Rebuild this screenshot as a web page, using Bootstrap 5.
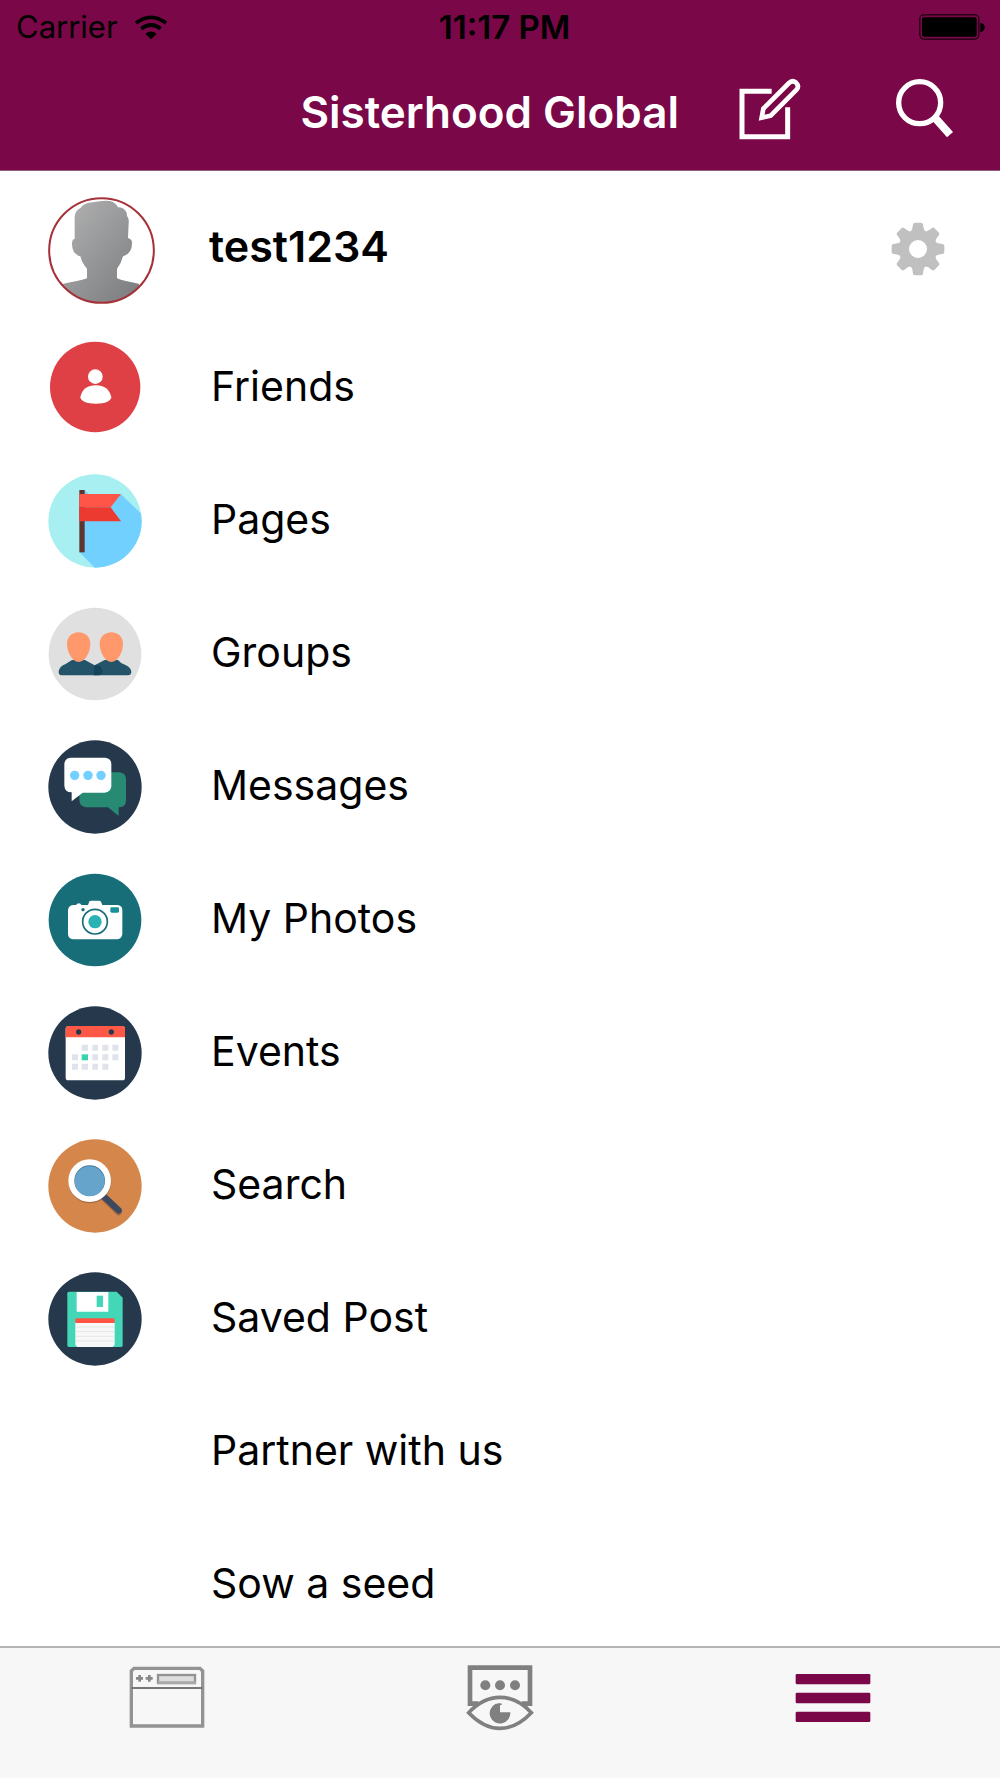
<!DOCTYPE html>
<html lang="en">
<head>
<meta charset="utf-8">
<meta name="viewport" content="width=device-width, initial-scale=1">
<title>Sisterhood Global</title>
<link href="https://cdn.jsdelivr.net/npm/bootstrap@5.3.0/dist/css/bootstrap.min.css" rel="stylesheet">
<style>
  :root { --brand: #7a0747; }
  body { font-family: Inter, "Liberation Sans", sans-serif; color: #000; background: #fff; }
  svg { display: block; flex: none; }
  .app-head { background: var(--brand); border-bottom: 1px solid #8d5f78; }
  .status-row { height: 54px; padding: 0 15px 0 16px; font-size: 31px; line-height: 54px; }
  .status-time { font-size: 33px; }
  .title-row { height: 116px; padding: 0 45px; }
  .title-row .btn { margin-bottom: 4px; }
  .app-title { font-size: 44px; line-height: 56px; font-weight: 600; color: #fff; margin-right: 58px; }
  .compose-btn { margin-right: 94px; }
  .menu-scroll { min-height: 0; scrollbar-width: none; }
  .profile-row { height: 150px; padding: 9px 52px 0 48px; }
  .profile-row .btn { margin-bottom: 4px; }
  .profile-name { font-size: 43px; line-height: 48px; font-weight: 600; margin-left: 54px; padding-bottom: 9px; }
  .menu-link { height: 133px; padding: 0 48px; gap: 69px; font-size: 41px; line-height: 48px; color: #000; text-decoration: none; }
  .menu-link span { padding-bottom: 4px; }
  .icon-slot { width: 94px; flex: none; }
  .tab-strip { height: 132px; background: #f7f7f7; border-top: 2px solid #b5b5b5; }
  .tab-strip a { padding-top: 16px; }
</style>
<script src="https://cdn.jsdelivr.net/npm/bootstrap@5.3.0/dist/js/bootstrap.bundle.min.js" defer></script>
</head>
<body>
<div class="vh-100 d-flex flex-column">
  <header class="app-head">
    <div class="status-row row g-0">
      <div class="col d-flex align-items-center">
        <span>Carrier</span>
        <svg class="ms-3" width="34" height="26" viewBox="399 40 102 78" aria-label="Wi-Fi"><path d="M405 67Q450 33 495 67M421 84Q450 62 479 84" fill="none" stroke="#000" stroke-width="11"/><path d="M433 99Q450 86 467 99L450 116Z"/></svg>
      </div>
      <div class="status-time col-auto ps-2 fw-semibold">11:17 PM</div>
      <div class="col d-flex align-items-center justify-content-end">
        <svg width="66" height="26" viewBox="1259 43 198 78" aria-label="Battery"><rect x="1261.500" y="45.500" width="177" height="73" rx="12" fill="none" stroke="#000" stroke-width="3"/><rect x="1268" y="53" width="164" height="58" rx="6"/><path d="M1443 69q13 2 13 14t-13 14z"/></svg>
      </div>
    </div>
    <div class="title-row d-flex align-items-center justify-content-end">
      <h1 class="app-title mb-0">Sisterhood Global</h1>
      <button type="button" class="btn p-0 border-0 compose-btn" aria-label="Compose">
        <svg width="64" height="64" viewBox="714 234 192 192" fill="none" stroke="#fff"><path d="M818 274H729V410H866V322" stroke-width="15"/><path d="M788 353L793 326L870 249Q880 239 891 248Q902 259 892 270L815 347Z" stroke-width="14"/></svg>
      </button>
      <button type="button" class="btn p-0 border-0" aria-label="Search">
        <svg width="60" height="64" viewBox="1182 234 180 192" fill="none" stroke="#fff"><circle cx="1256" cy="308" r="63" stroke-width="16"/><path d="M1299 350L1347 404" stroke-width="24"/></svg>
      </button>
    </div>
  </header>

  <main class="menu-scroll flex-fill overflow-auto">
    <div class="profile-row d-flex align-items-center">
      <svg width="107" height="107" viewBox="54 51 321 321" role="img" aria-label="Profile picture">
        <defs>
          <linearGradient id="shade" x1="0" y1="0" x2="1" y2="1"><stop offset="0" stop-color="#b4b4b4"/><stop offset="1" stop-color="#76787b"/></linearGradient>
          <clipPath id="face"><circle cx="214.500" cy="211.500" r="157"/></clipPath>
        </defs>
        <path clip-path="url(#face)" fill="url(#shade)" d="M134 176V108Q136 91 152 83Q162 69 188 67Q214 61 240 63Q258 68 264 82Q282 82 290 98L291 108Q298 115 296 130L294 174Q307 177 306 190Q306 221 279 229Q274 250 261 266V295Q282 304 326 311L345 375H84L100 311Q145 304 171 295V266Q156 250 151 229Q125 222 126 190Q126 178 134 176Z"/>
        <circle cx="214.500" cy="211.500" r="157" fill="none" stroke="#a63239" stroke-width="6"/>
      </svg>
      <div class="profile-name">test1234</div>
      <button type="button" class="btn p-0 border-0 ms-auto" aria-label="Settings">
        <svg width="60" height="60" viewBox="85 56 180 180">
          <g fill="#c0c0c0"><circle cx="175" cy="146" r="57"/>
          <g id="teeth"><path id="tooth" d="M152 94Q158 92 160 72Q161 67 166 67H184Q189 67 190 72Q192 92 198 94L190 110H160Z"/><use href="#tooth" transform="rotate(90 175 146)"/><use href="#tooth" transform="rotate(180 175 146)"/><use href="#tooth" transform="rotate(270 175 146)"/></g>
          <use href="#teeth" transform="rotate(45 175 146)"/></g>
          <circle cx="175" cy="146" r="27" fill="#fff"/>
        </svg>
      </button>
    </div>

    <nav class="d-flex flex-column" aria-label="Menu">
      <a class="menu-link d-flex align-items-center" href="#friends">
        <svg width="94" height="94" viewBox="53 481 282 282"><circle cx="194.500" cy="619" r="135.500" fill="#df4045"/><g fill="#fff"><circle cx="195" cy="588" r="22"/><path d="M150 650Q157 614 197 614Q235 614 243 650Q239 669 197 669Q154 669 150 650Z"/></g></svg>
        <span>Friends</span></a>
      <a class="menu-link d-flex align-items-center" href="#pages">
        <svg width="94" height="94" viewBox="53 39 282 282"><defs><clipPath id="disc"><circle cx="194" cy="180" r="140"/></clipPath></defs><circle cx="194" cy="180" r="140" fill="#a7eff0"/><path clip-path="url(#disc)" fill="#72d0ff" d="M163 88L175 100H272L345 170V330H203L148 274Z"/><path fill="#5f3430" d="M147 87H163V274H147Z"/><path fill="#ff5548" d="M147 99H272L241 139H147Z"/><path fill="#ec3a30" d="M147 139H241L272 181H147Z"/></svg>
        <span>Pages</span></a>
      <a class="menu-link d-flex align-items-center" href="#groups">
        <svg width="94" height="94" viewBox="53 438 282 282"><circle cx="194" cy="579" r="139" fill="#e0e0e0"/><path fill="#235469" d="M93 643Q84 642 85 631Q88 615 106 609L125 597H164L193 613L223 597H263Q270 607 284 611Q303 619 303 633Q302 643 293 643Z"/><path fill="#12445b" d="M193 613Q210 610 216 626Q218 639 207 643H190Z"/><path id="head" fill="#ff996c" d="M145 514C166 514 180 529 180 549C180 575 163 603 145 603C127 603 110 575 110 549C110 529 124 514 145 514Z"/><use href="#head" x="98"/></svg>
        <span>Groups</span></a>
      <a class="menu-link d-flex align-items-center" href="#messages">
        <svg width="94" height="94" viewBox="53 58 282 282"><circle cx="194" cy="199" r="140" fill="#26384b"/><path fill="#278b73" d="M165 155H267Q287 157 287 175V240Q286 259 265 260V286L233 260H168Q147 257 147 237V173Z"/><path fill="#fff" d="M120 111H225Q243 113 243 130V197Q241 215 223 216H157L124 242V215Q103 214 102 195V129Q104 112 120 111Z"/><g fill="#72cfff"><circle cx="133" cy="164" r="14"/><circle cx="173" cy="164" r="14"/><circle cx="212" cy="164" r="14"/></g></svg>
        <span>Messages</span></a>
      <a class="menu-link d-flex align-items-center" href="#photos">
        <svg width="94" height="94" viewBox="53 458 282 282"><circle cx="194" cy="599" r="139" fill="#176e79"/><path fill="#fff" d="M128 554H137Q140 549 146 549Q151 549 153 554H173L177 543Q179 541 184 541H206Q211 541 212 544L216 554H261Q276 556 276 569V642Q274 656 261 657H128Q114 655 113 642V569Q115 555 128 554Z"/><circle cx="194" cy="604" r="37" fill="#fff" stroke="#176e79" stroke-width="5"/><circle cx="194" cy="604" r="20" fill="#29b2b3"/><circle cx="158" cy="568" r="5" fill="#176e79"/><rect x="240" y="561" width="26" height="16" rx="4" fill="#18929a"/></svg>
        <span>My Photos</span></a>
      <a class="menu-link d-flex align-items-center" href="#events">
        <svg width="94" height="94" viewBox="53 47 282 282"><circle cx="194" cy="188" r="140" fill="#26384b"/><rect x="106" y="108" width="178" height="162" rx="8" fill="#fff"/><path fill="#ff5847" d="M106 141V116Q106 107 115 107H275Q284 107 284 116V141Z"/><g fill="#26384b"><circle cx="145" cy="125" r="8"/><circle cx="243" cy="125" r="8"/></g><path fill="#e0e3eb" d="M154 163h19v18h-19zM186 163h17v18h-17zM216 163h18v18h-18zM246 163h18v18h-18zM125 192h18v18h-18zM186 192h17v18h-17zM216 192h18v18h-18zM246 192h18v18h-18zM125 220h18v18h-18zM154 220h19v18h-19zM186 220h17v18h-17zM216 220h18v18h-18z"/><path fill="#39d3b0" d="M154 192h19v18h-19z"/></svg>
        <span>Events</span></a>
      <a class="menu-link d-flex align-items-center" href="#search">
        <svg width="94" height="94" viewBox="53 447 282 282"><circle cx="194" cy="588" r="140" fill="#d5874b"/><g fill="none" stroke="#7c553c" stroke-opacity=".55"><circle cx="179" cy="576" r="55" stroke-width="18"/><path d="M223 626L265 667" stroke-width="19" stroke-linecap="round"/></g><path d="M221 620L265 661" stroke="#3d495f" stroke-width="19" stroke-linecap="round"/><circle cx="178" cy="572" r="55" fill="#477b9c" stroke="#fff" stroke-width="18"/><circle cx="178" cy="574" r="45" fill="#66a4cb"/></svg>
        <span>Search</span></a>
      <a class="menu-link d-flex align-items-center" href="#saved">
        <svg width="94" height="94" viewBox="53 37 282 282"><circle cx="194" cy="178" r="140" fill="#26384b"/><path fill="#43d7b7" d="M116 96H259L277 114V257Q277 262 272 262H116Q111 262 111 257V101Q111 96 116 96Z"/><path fill="#fff" d="M139 97H234V156H139Z"/><path fill="#43d7b7" d="M199 108H218V142H199Z"/><path fill="#f8f8f8" d="M135 188H253V252Q252 262 242 262H146Q136 262 135 252Z"/><path fill="#ff5542" d="M135 190V180Q136 176 140 176H248Q253 176 253 181V190Z"/><path d="M136 202H252M136 216H252M136 230H252M136 244H252" stroke="#e4e7e6" stroke-width="3"/></svg>
        <span>Saved Post</span></a>
      <a class="menu-link d-flex align-items-center" href="#partner"><i class="icon-slot"></i><span>Partner with us</span></a>
      <a class="menu-link d-flex align-items-center" href="#seed"><i class="icon-slot"></i><span>Sow a seed</span></a>
    </nav>
  </main>

  <nav class="tab-strip nav nav-fill row g-0 flex-shrink-0" aria-label="Tabs">
    <a class="col d-flex justify-content-center" href="#feed" aria-label="Feed">
      <svg width="76" height="68" viewBox="87 87 228 204" fill="none" stroke="#939393"><path d="M102 100H300L308 108V273H94V108Z" stroke-width="10"/><path d="M94 159H308" stroke="#777" stroke-width="6"/><rect x="174" y="120" width="111" height="24" fill="#ddd" stroke-width="7"/><path d="M174 143H288" stroke="#aaa" stroke-width="9"/><path d="M108 130H129M119 120V140M137 130H158M148 120V140" stroke="#888" stroke-width="8"/></svg>
    </a>
    <a class="col d-flex justify-content-center" href="#watch" aria-label="Watch">
      <svg width="68" height="68" viewBox="1098 87 204 204" fill="none" stroke="#808080"><path d="M1135 206H1110V98H1290V206H1265" stroke-width="14"/><g fill="#808080" stroke="none"><circle cx="1156" cy="151" r="15"/><circle cx="1200" cy="151" r="15"/><circle cx="1245" cy="151" r="15"/></g><path d="M1106 233Q1149 187 1200 187Q1251 187 1294 233Q1249 280 1200 280Q1151 280 1106 233Z" fill="#f7f7f7" stroke-width="11"/><path d="M1200 204V232H1231A31 31 0 1 1 1186 207Z" fill="#808080" stroke="none"/><path d="M1187 211L1205 207" stroke-width="5"/></svg>
    </a>
    <a class="col d-flex justify-content-center" href="#menu" aria-label="Menu" aria-current="page">
      <svg width="76" height="68" viewBox="736 87 228 204" fill="#7a0747"><rect x="738" y="117" width="224" height="31" rx="4"/><rect x="738" y="173" width="224" height="32" rx="4"/><rect x="738" y="230" width="224" height="31" rx="4"/></svg>
    </a>
  </nav>
</div>
</body>
</html>
